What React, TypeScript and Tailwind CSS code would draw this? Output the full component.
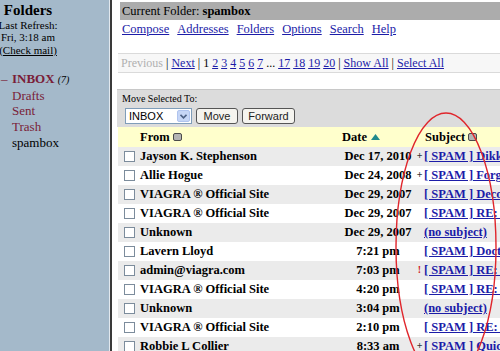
const folders = [
  { name: 'INBOX', active: true, count: '(7)' },
  { name: 'Drafts' },
  { name: 'Sent' },
  { name: 'Trash' },
  { name: 'spambox', plain: true },
];

const messages = [
  { from: 'Jayson K. Stephenson', date: 'Dec 17, 2010', flag: '+', subject: '[ SPAM ] Dikk pills' },
  { from: 'Allie Hogue', date: 'Dec 24, 2008', flag: '+', subject: '[ SPAM ] Forget it' },
  { from: 'VIAGRA \u00ae Official Site', date: 'Dec 29, 2007', flag: '', subject: '[ SPAM ] Decorate' },
  { from: 'VIAGRA \u00ae Official Site', date: 'Dec 29, 2007', flag: '', subject: '[ SPAM ] RE: order' },
  { from: 'Unknown', date: 'Dec 29, 2007', flag: '', subject: '(no subject)' },
  { from: 'Lavern Lloyd', date: '7:21 pm', flag: '', subject: '[ SPAM ] Doctor' },
  { from: 'admin@viagra.com', date: '7:03 pm', flag: '!', subject: '[ SPAM ] RE: order' },
  { from: 'VIAGRA \u00ae Official Site', date: '4:20 pm', flag: '', subject: '[ SPAM ] RE: order' },
  { from: 'Unknown', date: '3:04 pm', flag: '', subject: '(no subject)' },
  { from: 'VIAGRA \u00ae Official Site', date: '2:10 pm', flag: '', subject: '[ SPAM ] RE: order' },
  { from: 'Robbie L Collier', date: '8:33 am', flag: '+', subject: '[ SPAM ] Quick' },
];

const pages = ['2', '3', '4', '5', '6', '7'];
const lastPages = ['17', '18', '19', '20'];

function SortBox() {
  return <span className="inline-block w-[9px] h-[8px] ml-[3px] bg-[#b4b4b4] border border-[#4a4a4a] rounded-[2px]" />;
}

function Checkbox() {
  return <span className="inline-block w-[11px] h-[11px] shrink-0 border border-[#7c8c9c] bg-white" />;
}

export default function App() {
  return (
    <div className="relative w-[500px] h-[351px] overflow-hidden flex bg-white text-black font-['Liberation_Serif',serif]">
      {/* Left frame */}
      <aside className="w-[110px] shrink-0 bg-[#a4b9ca] border-r border-[#e2e8ee]">
        <div className="w-[56px] flex flex-col items-center pt-[1px]">
          <div className="text-[15px] font-bold leading-[18px]">Folders</div>
          <div className="text-[11px] leading-[12px] whitespace-nowrap">Last Refresh:</div>
          <div className="text-[11px] leading-[12px] whitespace-nowrap">Fri, 3:18 am</div>
          <div className="text-[11px] leading-[15px] whitespace-nowrap underline">(Check mail)</div>
        </div>
        <ul className="mt-[13px] text-[13px] leading-[15.7px]">
          {folders.map((f) => (
            <li key={f.name} className="flex items-baseline">
              <span className="w-[12px] pl-[1px] text-[#7a1d38]">{f.active ? '\u2013' : ''}</span>
              <span className={f.plain ? 'text-black' : f.active ? 'text-[#7a1d38] font-bold' : 'text-[#7a1d38]'}>
                {f.name}
              </span>
              {f.count && <span className="ml-[3px] text-[10px] italic">{f.count}</span>}
            </li>
          ))}
        </ul>
      </aside>

      {/* Right frame */}
      <main className="flex-1 border-l-2 border-[#3a3a3a] pt-[2px] pl-[6px] text-[12.5px]">
        <div className="ml-[2px] h-[18px] bg-[#acacac] pl-[2px] flex items-center">
          Current Folder:&nbsp;<b>spambox</b>
        </div>
        <nav className="h-[19px] pl-[4px] flex items-center gap-[8px] text-[#1c1ca8]">
          {['Compose', 'Addresses', 'Folders', 'Options', 'Search', 'Help'].map((l) => (
            <span key={l} className="underline">{l}</span>
          ))}
        </nav>

        <div className="mt-[14px] h-[20px] border-y border-[#dadada] bg-[#f7f7f7] pl-[3px] flex items-center whitespace-nowrap text-[12px]">
          <span className="text-[#b0b0b0]">Previous</span>
          <span>&nbsp;|&nbsp;</span>
          <span className="text-[#1c1ca8] underline">Next</span>
          <span>&nbsp;|&nbsp;1</span>
          {pages.map((p) => (
            <span key={p}>&nbsp;<span className="text-[#1c1ca8] underline">{p}</span></span>
          ))}
          <span>&nbsp;...</span>
          {lastPages.map((p) => (
            <span key={p}>&nbsp;<span className="text-[#1c1ca8] underline">{p}</span></span>
          ))}
          <span>&nbsp;|&nbsp;</span>
          <span className="text-[#1c1ca8] underline">Show All</span>
          <span>&nbsp;|&nbsp;</span>
          <span className="text-[#1c1ca8] underline">Select All</span>
        </div>

        {/* Move box */}
        <div className="mt-[16px] -ml-[1px] h-[38px] bg-[#dcdcdc] border-t border-[#c8c8c8] pl-[5px] pt-[3px]">
          <div className="text-[10px] leading-[12px]">Move Selected To:</div>
          <div className="mt-[3px] flex items-center gap-[4px] font-['Liberation_Sans',sans-serif] text-[11px]">
            <div className="ml-[3px] w-[67px] h-[16px] bg-white border border-[#7f9db9] flex items-center justify-between pl-[3px] pr-[1px]">
              <span>INBOX</span>
              <span className="w-[13px] h-[12px] rounded-[2px] bg-[#c6d6f6] border border-[#b0c4ee] flex items-center justify-center">
                <svg width="7" height="5" viewBox="0 0 7 5">
                  <path d="M0.5 0.8 L3.5 3.8 L6.5 0.8" stroke="#4d6185" strokeWidth="1.6" fill="none" />
                </svg>
              </span>
            </div>
            <button className="h-[16px] w-[42px] rounded-[3px] border border-[#555] bg-[#f5f4ef] text-[#222] leading-none">Move</button>
            <button className="h-[16px] w-[53px] rounded-[3px] border border-[#555] bg-[#f5f4ef] text-[#222] leading-none">Forward</button>
          </div>
        </div>

        {/* Message list */}
        <div className="text-[12.5px] font-bold">
          <div className="h-[20px] bg-[#ffffcc] flex items-center">
            <div className="w-[222px] pl-[22px] flex items-center">From<SortBox /></div>
            <div className="w-[76px] pl-[2px] flex items-center">
              Date
              <svg className="ml-[4px]" width="9" height="6" viewBox="0 0 9 6">
                <path d="M0 6 L4.5 0 L9 6 Z" fill="#1f8a8c" />
              </svg>
            </div>
            <div className="flex-1 pl-[9px] flex items-center">Subject<SortBox /></div>
          </div>
          {messages.map((m, i) => (
            <div key={i} className={`h-[19px] flex items-center whitespace-nowrap ${i % 2 === 0 ? 'bg-[#ebebeb]' : 'bg-white'}`}>
              <div className="w-[222px] pl-[6px] flex items-center gap-[5px]">
                <Checkbox />
                <span>{m.from}</span>
              </div>
              <div className="w-[76px] text-center">{m.date}</div>
              <div className={`w-[7px] self-start pt-[1px] text-[10px] text-center ${m.flag === '!' ? 'text-[#d02020]' : 'text-[#333]'}`}>
                {m.flag}
              </div>
              <div className="flex-1 overflow-hidden pl-[1px] text-[#1c1ca8] underline">{m.subject}</div>
            </div>
          ))}
        </div>
      </main>

      {/* Hand-drawn highlight */}
      <svg className="absolute inset-0 pointer-events-none" width="500" height="351" viewBox="0 0 500 351">
        <ellipse cx="446" cy="247" rx="50" ry="134" fill="none" stroke="#e0262c" strokeWidth="1.4" />
      </svg>
    </div>
  );
}
